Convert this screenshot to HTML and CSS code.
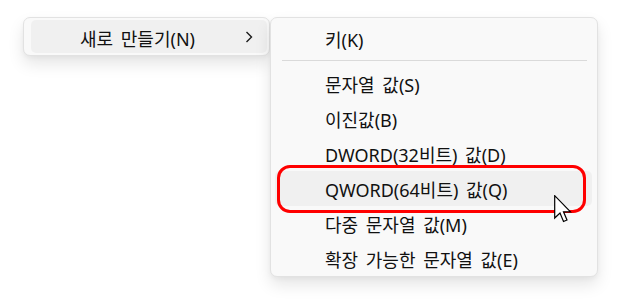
FILE: index.html
```html
<!DOCTYPE html>
<html lang="ko">
<head>
<meta charset="utf-8">
<link rel="stylesheet" href="styles.css">
</head>
<body>
<div class="stage">
  <div class="menu menu-parent">
    <div class="item item-active">
      <span class="label">새로 만들기(N)</span>
      <svg class="chevron" width="8" height="12" viewBox="0 0 8 12"><polyline points="1.5,1 6.5,6 1.5,11" fill="none" stroke="#1b1b1b" stroke-width="1.4"/></svg>
    </div>
  </div>
  <div class="menu menu-sub">
    <div class="item item-first"><span class="label">키(K)</span></div>
    <div class="sep"></div>
    <div class="item"><span class="label">문자열 값(S)</span></div>
    <div class="item"><span class="label">이진값(B)</span></div>
    <div class="item"><span class="label">DWORD(32비트) 값(D)</span></div>
    <div class="item item-hover">
      <span class="label">QWORD(64비트) 값(Q)</span>
      <div class="highlight-ring"></div>
      <svg class="cursor" width="18" height="28" viewBox="0 0 18 28"><path d="M0.7,0.7 L0.7,23 L6,18 L9.5,26.5 L13,25 L9.5,16.8 L16.5,16.8 Z" fill="#fff" stroke="#000" stroke-width="1.2" stroke-linejoin="miter"/></svg>
    </div>
    <div class="item"><span class="label">다중 문자열 값(M)</span></div>
    <div class="item"><span class="label">확장 가능한 문자열 값(E)</span></div>
  </div>
</div>
</body>
</html>
```

FILE: styles.css
```css
html, body {
  margin: 0;
  padding: 0;
  background: #ffffff;
}

body {
  font-family: "Noto Sans", "Noto Sans CJK KR", sans-serif;
  color: #111111;
  width: 628px;
  height: 300px;
  overflow: hidden;
}

.stage {
  display: flex;
  align-items: flex-start;
  padding: 17px 0 0 23px;
}

.menu {
  background: #f9f9f9;
  border: 1px solid #e2e2e2;
  border-radius: 7px;
  box-sizing: border-box;
  box-shadow: 0 8px 16px rgba(0, 0, 0, 0.10), 0 2px 5px rgba(0, 0, 0, 0.04);
}

.menu-parent {
  width: 247px;
  padding: 2px 2px 2px 7px;
  position: relative;
  z-index: 1;
}

.menu-sub {
  width: 328px;
  padding: 3px 5px 0 4px;
  position: relative;
  z-index: 2;
  height: 260px;
}

.item {
  position: relative;
  display: flex;
  align-items: center;
  height: 35px;
  box-sizing: border-box;
  padding: 3px 0 0 50px;
  font-size: 18px;
  line-height: 20px;
  word-spacing: 3px;
  border-radius: 5px;
}

.item-first {
  height: 34px;
}

.item-active {
  height: 33px;
  background: #f0f0f0;
  padding-left: 49px;
  padding-top: 4px;
}

.item-hover {
  background: #f0f0f0;
}

.label {
  white-space: nowrap;
}

.chevron {
  margin-left: auto;
  margin-right: 14px;
  margin-top: -3px;
}

.sep {
  height: 1px;
  background: #dadada;
  margin: 5px 5px 5px 7px;
}

.highlight-ring {
  position: absolute;
  left: 2px;
  top: -6px;
  width: 309px;
  height: 48px;
  box-sizing: border-box;
  border: 3px solid #ff0000;
  border-radius: 13px;
}

.cursor {
  position: absolute;
  left: 279px;
  top: 24px;
}
```
